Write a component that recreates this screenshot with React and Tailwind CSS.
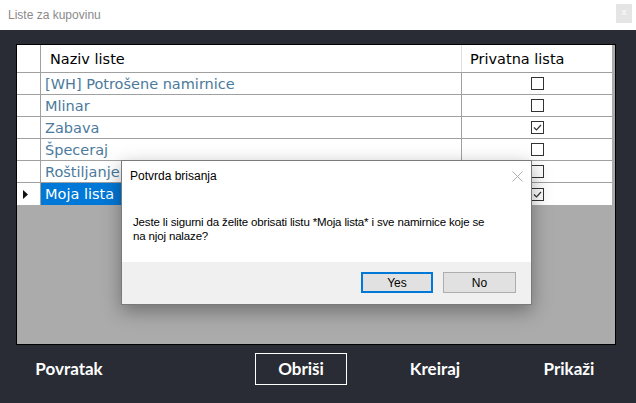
import React from "react";

const rows = [
    { name: "[WH] Potrošene namirnice", priv: false },
    { name: "Mlinar", priv: false },
    { name: "Zabava", priv: true },
    { name: "Špeceraj", priv: false },
    { name: "Roštiljanje", priv: false },
    { name: "Moja lista", priv: true, selected: true },
];

function Check({ checked }) {
    return (
        <div className="w-[13px] h-[13px] border border-[#333] bg-white flex items-center justify-center">
            {checked && (
                <svg width="11" height="11" viewBox="0 0 11 11">
                    <path d="M2 5.5 L4.5 8 L9 3" fill="none" stroke="#333" strokeWidth="1.2" />
                </svg>
            )}
        </div>
    );
}

export default function App() {
    const gothic = { fontFamily: '"DejaVu Sans", sans-serif' };
    const bold = { fontFamily: 'Lato, sans-serif' };
    return (
        <div className="w-[636px] h-[403px] flex flex-col bg-[#292c35] relative overflow-hidden" style={{ fontFamily: '"Liberation Sans", sans-serif' }}>
            {/* title bar */}
            <div className="h-[30px] bg-white flex items-center justify-between pl-[8px] pr-[4px]">
                <span className="text-[12px] text-[#8a8a8a]">Liste za kupovinu</span>
                <div className="w-[16px] h-[19px] bg-[#e5e5e5] text-white text-[9px] flex items-center justify-center mb-[4px]">x</div>
            </div>

            <div className="flex-1 flex flex-col pt-[14px] px-[16px]">
                {/* data grid */}
                <div className="w-[600px] h-[301px] border border-black bg-[#ababab]">
                    <div className="w-[595px] bg-white text-[14.5px]" style={gothic}>
                        <div className="flex h-[28px] border-b border-[#a0a0a0]">
                            <div className="w-[24px] border-r border-[#a0a0a0]" />
                            <div className="w-[421px] border-r border-[#e0e0e0] pl-[9px] pt-[2px] flex items-center text-black">Naziv liste</div>
                            <div className="flex-1 pl-[8px] pt-[2px] flex items-center text-black">Privatna lista</div>
                        </div>
                        {rows.map((r, i) => (
                            <div key={i} className={"flex h-[22px] " + (i < rows.length - 1 ? "border-b border-[#a0a0a0]" : "")}>
                                <div className="w-[24px] border-r border-[#a0a0a0] flex items-center pl-[6px]">
                                    {r.selected && (
                                        <svg width="6" height="9" viewBox="0 0 6 9">
                                            <path d="M0 0 L5 4.5 L0 9 Z" fill="#111" />
                                        </svg>
                                    )}
                                </div>
                                <div className={"w-[421px] border-r border-[#a0a0a0] pl-[4px] pt-[2px] flex items-center " + (r.selected ? "bg-[#0078d7] text-white" : "text-[#4a7a9c]")}>
                                    {r.name}
                                </div>
                                <div className="flex-1 flex items-center justify-center">
                                    <Check checked={r.priv} />
                                </div>
                            </div>
                        ))}
                    </div>
                </div>

                {/* bottom buttons */}
                <div className="flex items-center mt-[8px] text-white font-bold text-[17px]" style={bold}>
                    <div className="w-[100px] h-[32px] ml-[3px] flex items-center justify-center">Povratak</div>
                    <div className="w-[92px] h-[32px] ml-[136px] border border-white flex items-center justify-center">Obriši</div>
                    <div className="w-[92px] h-[32px] ml-[42px] flex items-center justify-center">Kreiraj</div>
                    <div className="w-[92px] h-[32px] ml-[42px] flex items-center justify-center">Prikaži</div>
                </div>
            </div>

            {/* message box */}
            <div className="absolute left-[121px] top-[160px] w-[411px] h-[145px] bg-white border border-[#7a7a7a] shadow-[0_6px_18px_rgba(0,0,0,0.35)] flex flex-col text-[12px] text-black">
                <div className="h-[30px] flex items-center justify-between pl-[8px] pr-[8px]">
                    <span>Potvrda brisanja</span>
                    <svg width="11" height="11" viewBox="0 0 11 11">
                        <path d="M0.5 0.5 L10.5 10.5 M10.5 0.5 L0.5 10.5" stroke="#b0b0b0" strokeWidth="1" />
                    </svg>
                </div>
                <div className="flex-1 pl-[11px] pr-[38px] pt-[24px] leading-[14px] text-[11.5px] tracking-[-0.15px]">
                    Jeste li sigurni da želite obrisati listu *Moja lista* i sve namirnice koje se na njoj nalaze?
                </div>
                <div className="h-[42px] bg-[#f0f0f0] flex items-start justify-end pt-[10px] pr-[15px] gap-[10px]">
                    <div className="w-[72px] h-[21px] bg-[#e1e1e1] border-2 border-[#0078d7] flex items-center justify-center">Yes</div>
                    <div className="w-[73px] h-[21px] bg-[#e1e1e1] border border-[#adadad] flex items-center justify-center">No</div>
                </div>
            </div>
        </div>
    );
}
